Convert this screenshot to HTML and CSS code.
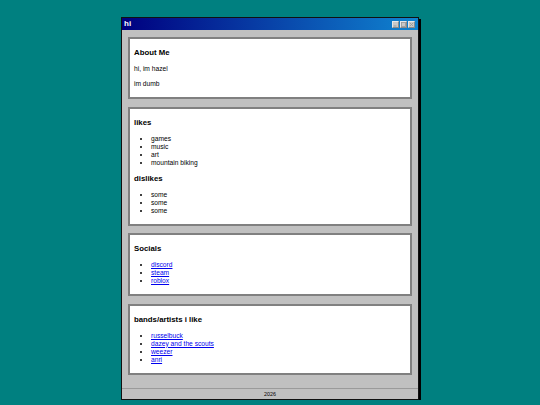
FILE: index.html
```html
<!DOCTYPE html>
<html>
<head>
<meta charset="utf-8">
<title>hi</title>
<link rel="stylesheet" href="styles.css">
</head>
<body>
<div class="desktop">
  <div class="window">
    <div class="titlebar">
      <span class="title">hi</span>
      <div class="controls">
        <span class="btn"><svg width="5" height="5" viewBox="0 0 5 5"><rect x="0.5" y="3.5" width="3" height="1" fill="#9a9a9a"/></svg></span>
        <span class="btn"><svg width="5" height="5" viewBox="0 0 5 5"><rect x="0.5" y="0.5" width="4" height="4" fill="none" stroke="#9a9a9a" stroke-width="0.8"/></svg></span>
        <span class="btn"><svg width="5" height="5" viewBox="0 0 5 5"><path d="M0.8 0.8 L4.2 4.2 M4.2 0.8 L0.8 4.2" stroke="#9a9a9a" stroke-width="0.9"/></svg></span>
      </div>
    </div>
    <div class="content">
      <section class="card">
        <h3>About Me</h3>
        <p>hi, im hazel</p>
        <p>im dumb</p>
      </section>
      <section class="card">
        <h3>likes</h3>
        <ul>
          <li>games</li>
          <li>music</li>
          <li>art</li>
          <li>mountain biking</li>
        </ul>
        <h3>dislikes</h3>
        <ul>
          <li>some</li>
          <li>some</li>
          <li>some</li>
        </ul>
      </section>
      <section class="card">
        <h3>Socials</h3>
        <ul>
          <li><a href="#">discord</a></li>
          <li><a href="#">steam</a></li>
          <li><a href="#">roblox</a></li>
        </ul>
      </section>
      <section class="card">
        <h3>bands/artists i like</h3>
        <ul>
          <li><a href="#">russelbuck</a></li>
          <li><a href="#">dazey and the scouts</a></li>
          <li><a href="#">weezer</a></li>
          <li><a href="#">anri</a></li>
        </ul>
      </section>
    </div>
    <div class="statusbar">2026</div>
  </div>
</div>
</body>
</html>
```
FILE: styles.css
```css
* { box-sizing: border-box; }
html, body {
  margin: 0;
  padding: 0;
  background: #008080;
  font-family: "Liberation Sans", Arial, sans-serif;
}
.desktop {
  display: flex;
  justify-content: center;
  padding-top: 17px;
}
.window {
  width: 298px;
  background: #c0c0c0;
  border: 1px solid #111;
  box-shadow: 2px 2px 0 #000;
}
.titlebar {
  height: 12px;
  display: flex;
  align-items: center;
  justify-content: space-between;
  padding: 0 3px 0 2px;
  background: linear-gradient(to right, #000080, #1084d0);
}
.title {
  color: #fff;
  font-weight: bold;
  font-size: 8px;
  line-height: 12px;
}
.controls {
  display: flex;
  gap: 1px;
}
.btn {
  width: 7px;
  height: 7px;
  background: #c8c8c8;
  border-top: 1px solid #e8e8e8;
  border-left: 1px solid #e8e8e8;
  border-right: 1px solid #8a8a8a;
  border-bottom: 1px solid #8a8a8a;
  display: flex;
  align-items: center;
  justify-content: center;
}
.btn svg { display: block; }
.content {
  padding: 7px 6px 13px;
  display: flex;
  flex-direction: column;
  gap: 7.5px;
}
.card {
  background: #fff;
  border: 2px solid #808080;
  padding: 2px 4px;
  color: #000;
}
.card h3 {
  margin: 7px 0;
  font-size: 7.8px;
  line-height: 10px;
  font-weight: bold;
}
.card p {
  margin: 7px 0;
  font-size: 6.67px;
  line-height: 8px;
}
.card ul {
  margin: 7px 0;
  padding-left: 17px;
  font-size: 6.67px;
  line-height: 8px;
}
.card a {
  color: #0000ee;
}
.statusbar {
  border-top: 1px solid #9a9a9a;
  height: 11px;
  text-align: center;
  font-size: 5.33px;
  line-height: 10px;
  color: #000;
}
```
